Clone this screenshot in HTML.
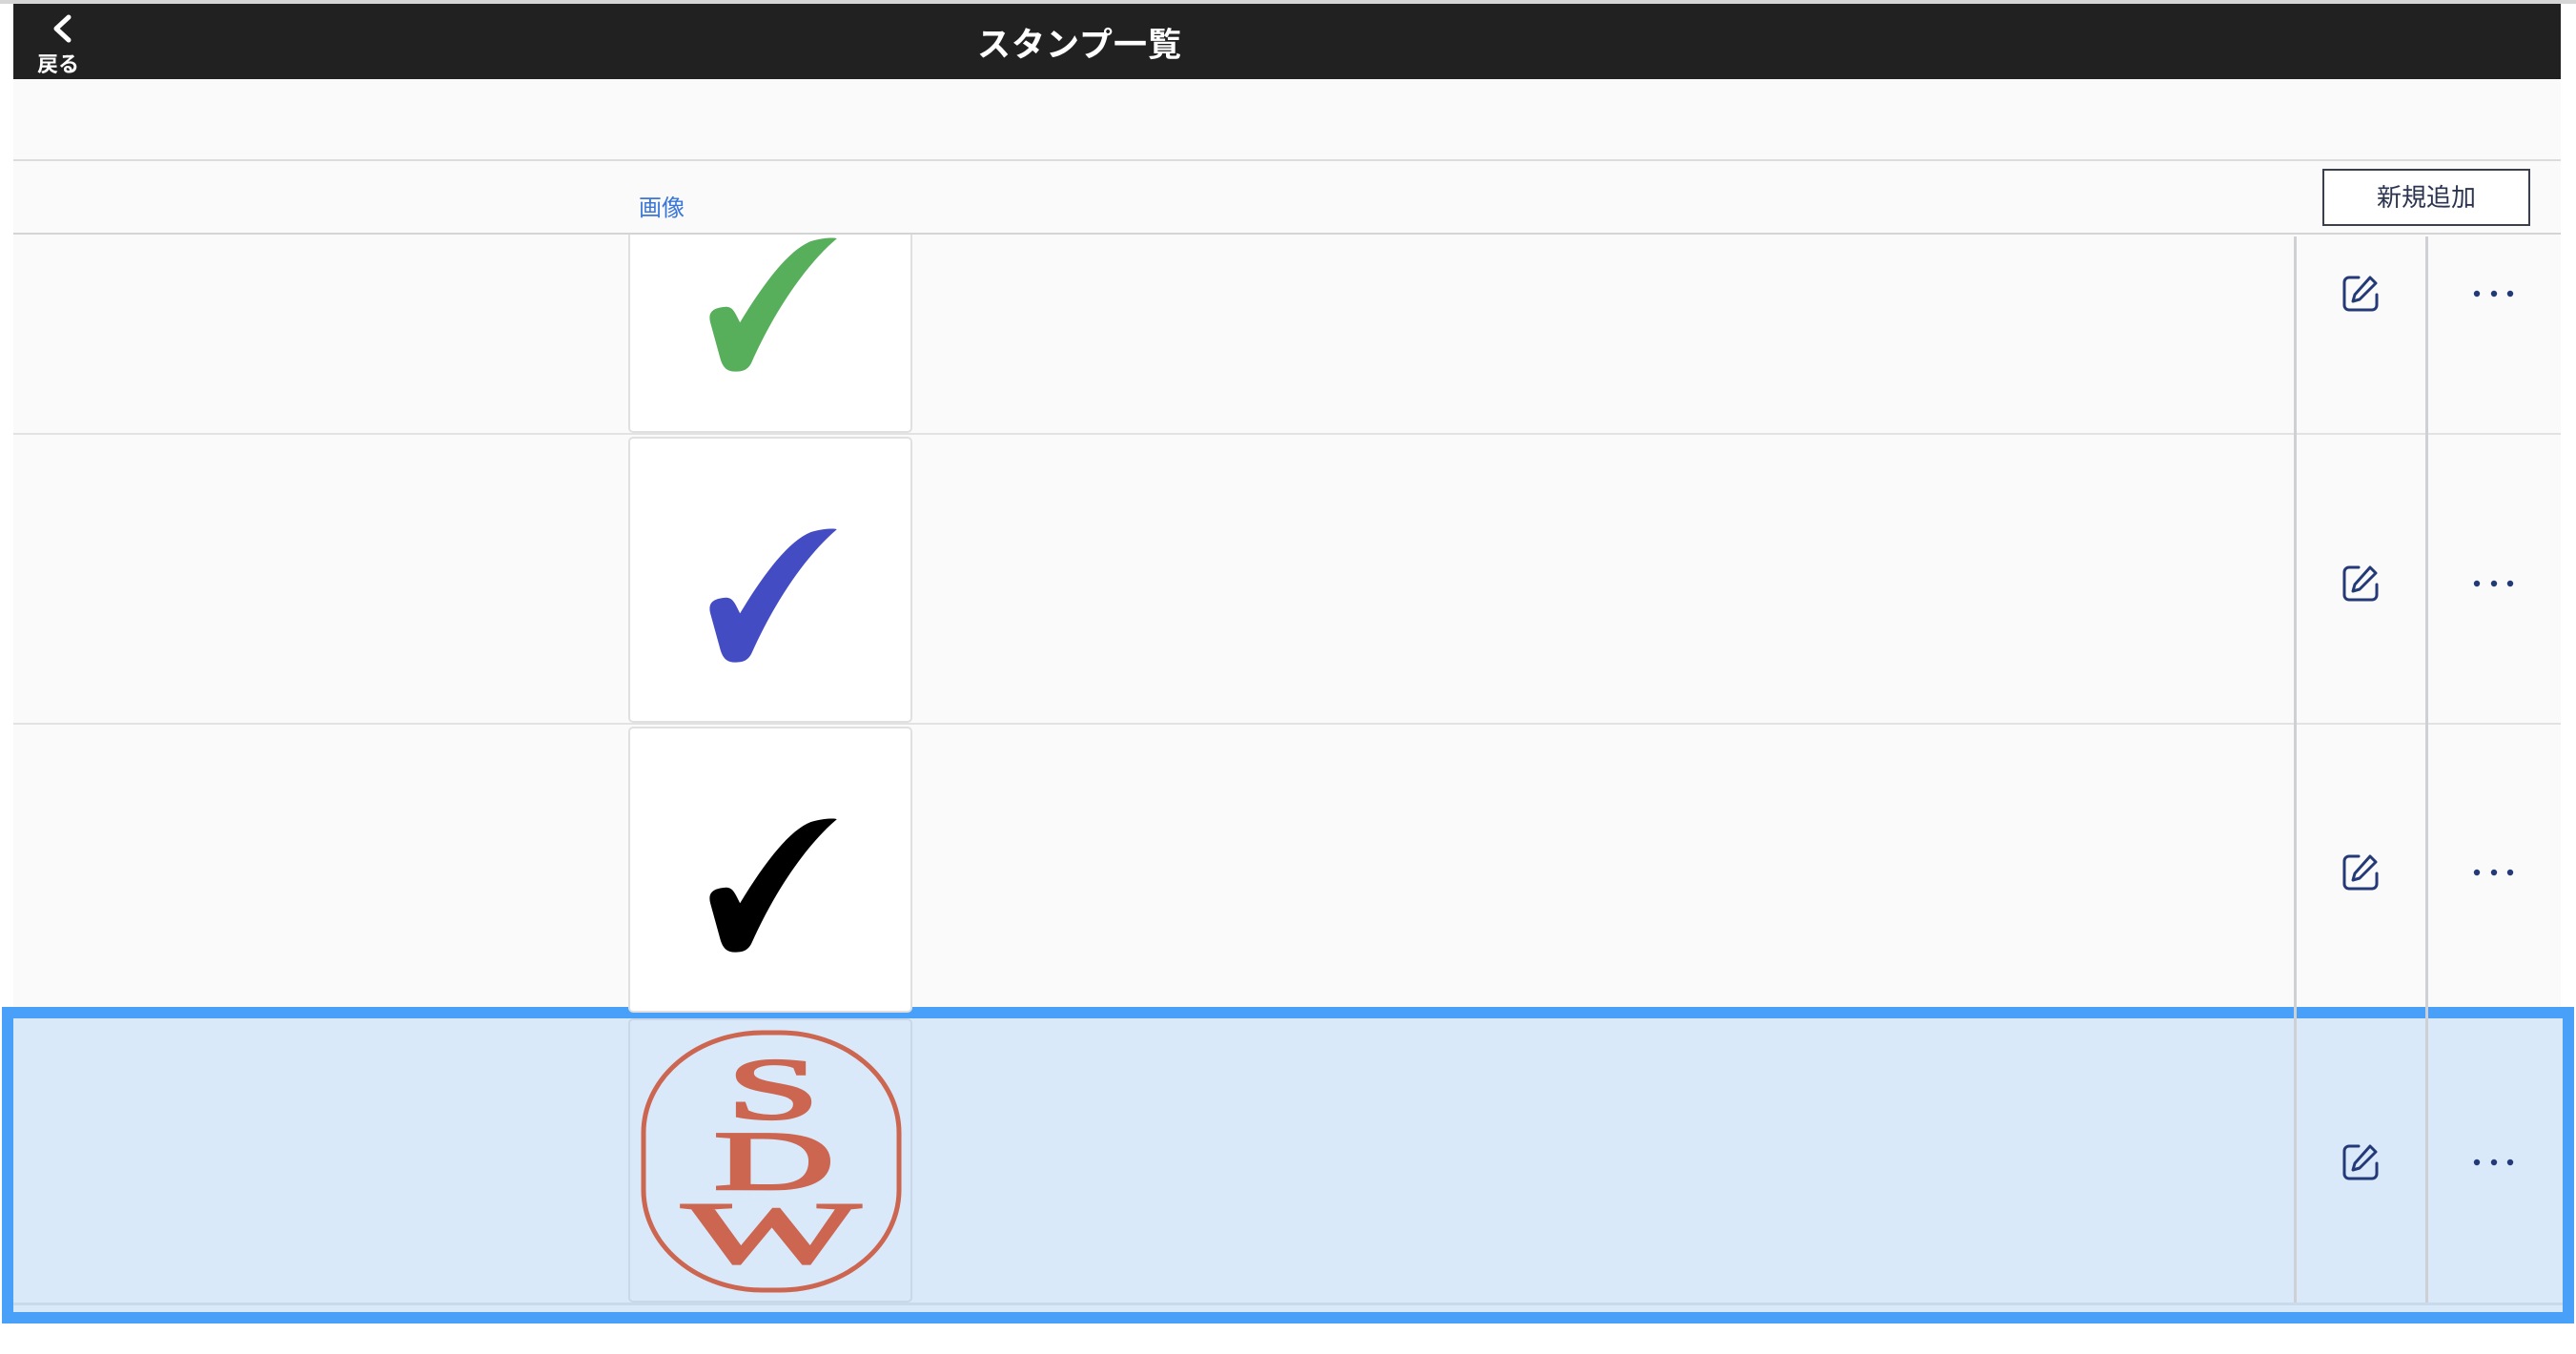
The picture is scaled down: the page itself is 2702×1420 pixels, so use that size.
<!DOCTYPE html>
<html><head><meta charset="utf-8">
<style>
*{margin:0;padding:0;box-sizing:border-box}
body{width:2702px;height:1420px;background:#fff;position:relative;overflow:hidden;font-family:"Liberation Sans","Noto Sans CJK JP",sans-serif}
.a{position:absolute}
.line{position:absolute;background:#e2e2e2}
.cell{position:absolute;left:659px;width:298px;background:#fff;border:2px solid #e0e0e0;border-radius:5px}
.vl{position:absolute;width:3px;background:#cfd0d4}
</style></head><body>
<div class="a" style="left:0;top:0;width:2702px;height:4px;background:#d6d6d6"></div>
<div class="a" style="left:14px;top:4px;width:2672px;height:1380px;background:#fafafa"></div>
<div class="a" style="left:14px;top:4px;width:2672px;height:79px;background:#212121"></div>
<svg class="a" style="left:50px;top:14px" width="30" height="32" viewBox="0 0 30 32"><path d="M22 4 L9 16 L22 28" fill="none" stroke="#fff" stroke-width="5" stroke-linecap="round" stroke-linejoin="round"/></svg>
<div class="a" style="left:39px;top:50px;font-size:22px;color:#fff;font-weight:bold">戻る</div>
<div class="a" style="left:1025px;top:19px;font-size:35px;color:#fff;font-weight:bold;letter-spacing:1px">スタンプ一覧</div>
<div class="line" style="left:14px;top:454px;width:2672px;height:2px"></div>
<div class="line" style="left:14px;top:758px;width:2672px;height:2px"></div>
<div class="line" style="left:14px;top:1061px;width:2672px;height:2px"></div>
<!-- selected row -->
<div class="a" style="left:2px;top:1056px;width:2698px;height:332px;border:12px solid #48a0f8;background:#d9e9fa"></div>
<div class="a" style="left:14px;top:1366px;width:2674px;height:3px;background:#c9daeb"></div>
<!-- cells -->
<div class="cell" style="top:230px;height:224px"></div>
<div class="cell" style="top:458px;height:300px"></div>
<div class="cell" style="top:762px;height:300px"></div>
<div class="cell" style="top:1068px;height:298px;background:#d9e9fa;border-color:#c8d8e8"></div>
<div class="a" style="left:14px;top:167px;width:2672px;height:79px;background:#fafafa;border-top:2px solid #dcdcdc;border-bottom:2px solid #d4d4d4"></div>
<div class="a" style="left:670px;top:198px;font-size:24px;color:#3a76d8">画像</div>
<div class="a" style="left:2436px;top:177px;width:218px;height:60px;border:2px solid #3a3f4c;background:#fff;font-size:26px;color:#2c3550;text-align:center;line-height:56px">新規追加</div>
<!-- vertical lines -->
<div class="vl" style="left:2406px;top:248px;height:1118px"></div>
<div class="vl" style="left:2544px;top:248px;height:1118px"></div>
<!-- checks -->
<svg class="a" style="left:741px;top:249px" width="138" height="142" viewBox="0 0 100 105"><path d="M2 66 C0 58 4 55 12 54 C18 53 20 56 23 62 L25 66 C42 38 62 10 80 3 C90 0 100 0 100 1 C82 16 56 48 34 97 C31 103 27 104 21 104 C15 104 12 101 10 95 Z" fill="#57af5b"/></svg>
<svg class="a" style="left:741px;top:554px" width="138" height="142" viewBox="0 0 100 105"><path d="M2 66 C0 58 4 55 12 54 C18 53 20 56 23 62 L25 66 C42 38 62 10 80 3 C90 0 100 0 100 1 C82 16 56 48 34 97 C31 103 27 104 21 104 C15 104 12 101 10 95 Z" fill="#444cc4"/></svg>
<svg class="a" style="left:741px;top:858px" width="138" height="142" viewBox="0 0 100 105"><path d="M2 66 C0 58 4 55 12 54 C18 53 20 56 23 62 L25 66 C42 38 62 10 80 3 C90 0 100 0 100 1 C82 16 56 48 34 97 C31 103 27 104 21 104 C15 104 12 101 10 95 Z" fill="#000"/></svg>
<!-- SDW stamp -->
<svg class="a" style="left:672px;top:1080px" width="274" height="276" viewBox="0 0 274 276">
<rect x="3" y="3" width="268" height="270" rx="125" ry="105" fill="none" stroke="#cc6650" stroke-width="5"/>
<g fill="#cc6650" stroke="#cc6650" stroke-width="2.5" font-family="Liberation Serif,serif" text-anchor="middle">
<text x="0" y="0" font-size="92" transform="translate(139 93) scale(1.9 1)">S</text>
<text x="0" y="0" font-size="88" transform="translate(140 167) scale(2.0 1)">D</text>
<text x="0" y="0" font-size="92" transform="translate(137 244) scale(2.15 1)">W</text>
</g></svg>
<!-- icons -->
<svg style="display:none"><defs><g id="ed"><path d="M18 4 H8 A5 5 0 0 0 3 9 V33 A5 5 0 0 0 8 38 H32 A5 5 0 0 0 37 33 V22" fill="none" stroke="#243a78" stroke-width="3" stroke-linecap="round"/><path d="M30 4 L36 10 L19 27 L12 29 L14 22 Z" fill="none" stroke="#243a78" stroke-width="3" stroke-linejoin="round"/></g></defs></svg>
<svg class="a" style="left:2456px;top:287px" width="42" height="42"><use href="#ed"/></svg>
<svg class="a" style="left:2456px;top:591px" width="42" height="42"><use href="#ed"/></svg>
<svg class="a" style="left:2456px;top:894px" width="42" height="42"><use href="#ed"/></svg>
<svg class="a" style="left:2456px;top:1198px" width="42" height="42"><use href="#ed"/></svg>
<svg class="a" style="left:2590px;top:300px" width="52" height="16"><g fill="#243a78"><circle cx="8" cy="8" r="3.2"/><circle cx="26" cy="8" r="3.2"/><circle cx="43" cy="8" r="3.2"/></g></svg>
<svg class="a" style="left:2590px;top:604px" width="52" height="16"><g fill="#243a78"><circle cx="8" cy="8" r="3.2"/><circle cx="26" cy="8" r="3.2"/><circle cx="43" cy="8" r="3.2"/></g></svg>
<svg class="a" style="left:2590px;top:907px" width="52" height="16"><g fill="#243a78"><circle cx="8" cy="8" r="3.2"/><circle cx="26" cy="8" r="3.2"/><circle cx="43" cy="8" r="3.2"/></g></svg>
<svg class="a" style="left:2590px;top:1211px" width="52" height="16"><g fill="#243a78"><circle cx="8" cy="8" r="3.2"/><circle cx="26" cy="8" r="3.2"/><circle cx="43" cy="8" r="3.2"/></g></svg>
</body></html>
